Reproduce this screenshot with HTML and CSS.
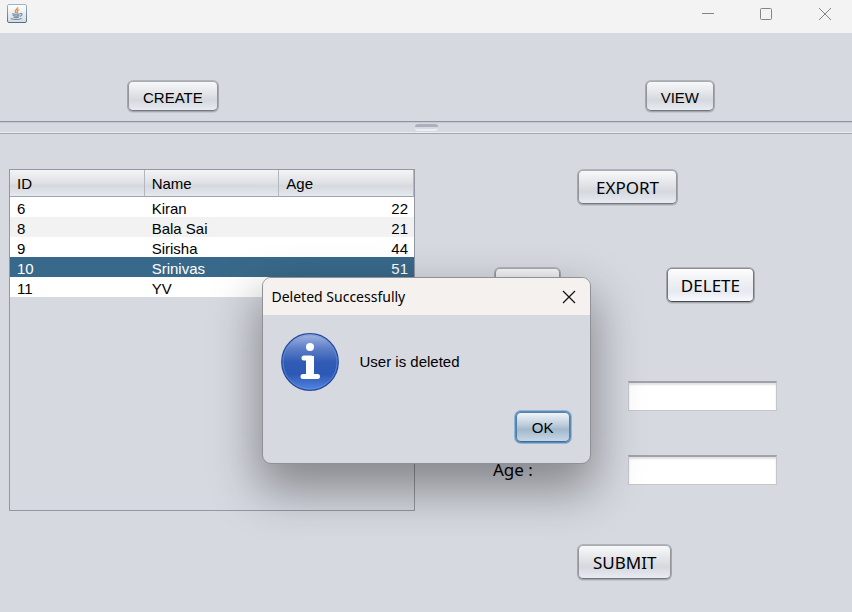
FILE: index.html
```html
<!DOCTYPE html>
<html lang="en">
<head>
<meta charset="utf-8">
<title>Users</title>
<link rel="stylesheet" href="styles.css">
</head>
<body>
<header class="titlebar">
  <svg class="app-icon" viewBox="0 0 20 20" aria-hidden="true">
    <defs>
      <linearGradient id="frame" x1="0" y1="0" x2="0" y2="1"><stop offset="0" stop-color="#9db4c6"/><stop offset="1" stop-color="#4f7187"/></linearGradient>
      <linearGradient id="face" x1="0" y1="0" x2="0" y2="1"><stop offset="0" stop-color="#ffffff"/><stop offset="1" stop-color="#d5dbe2"/></linearGradient>
    </defs>
    <rect x="0.5" y="0.5" width="19" height="18" rx="1.5" fill="url(#face)" stroke="url(#frame)"/>
    <path d="M10.6 3.3C11.5 5 7.4 6 8.2 7.7 8.5 8.4 9.2 8.7 9.1 9.3M11.8 5.6C10.2 6.3 9.8 7 10.4 7.8 10.7 8.4 10.3 8.9 10.1 9.2" fill="none" stroke="#ee8b3a" stroke-width="1.3"/>
    <path d="M5 9.8Q9 10.8 13 9.8M5.8 11.6Q9 12.6 12.3 11.6M6.6 13.2Q9 14 11.6 13.2M3.8 14.6Q9 16.5 14.6 14.5M13 9.7Q15.3 9.1 15 10.6 14.6 11.9 12.8 12.4" fill="none" stroke="#6e8ca5" stroke-width="1.1"/>
  </svg>
  <div class="window-controls">
    <button type="button" class="window-control" aria-label="Minimize"><svg viewBox="0 0 14 14"><path d="M0 7.5H12"/></svg></button>
    <button type="button" class="window-control" aria-label="Maximize"><svg viewBox="0 0 14 14"><rect x="0.5" y="2.5" width="11" height="11" rx="1"/></svg></button>
    <button type="button" class="window-control" aria-label="Close"><svg viewBox="0 0 14 14"><path d="M1 2L13 14M13 2L1 14"/></svg></button>
  </div>
</header>
<nav class="modes">
  <button type="button" class="button">CREATE</button>
  <button type="button" class="button">VIEW</button>
</nav>
<div class="divider"><span class="grip"></span></div>
<main class="content">
  <div class="table-pane">
    <table class="users">
      <thead><tr><th>ID</th><th>Name</th><th>Age</th></tr></thead>
      <tbody>
        <tr><td>6</td><td>Kiran</td><td>22</td></tr>
        <tr><td>8</td><td>Bala Sai</td><td>21</td></tr>
        <tr><td>9</td><td>Sirisha</td><td>44</td></tr>
        <tr class="selected"><td>10</td><td>Srinivas</td><td>51</td></tr>
        <tr><td>11</td><td>YV</td><td></td></tr>
      </tbody>
    </table>
  </div>
  <form class="editor">
    <div class="export-row"><button type="button" class="button large">EXPORT</button></div>
    <div class="action-row">
      <button type="button" class="button large" aria-label="Edit"></button>
      <button type="button" class="button large lit">DELETE</button>
    </div>
    <div class="field-row"><label for="name">Name :</label><input id="name" type="text"></div>
    <div class="field-row"><label for="age">Age :</label><input id="age" type="text"></div>
    <div class="submit-row"><button type="button" class="button large">SUBMIT</button></div>
  </form>
</main>
<dialog open class="message" aria-labelledby="message-title">
  <div class="message-head">
    <h1 id="message-title">Deleted Successfully</h1>
    <button type="button" class="message-close" aria-label="Close"><svg viewBox="0 0 14 14"><path d="M1 1L13 13M13 1L1 13"/></svg></button>
  </div>
  <div class="message-body">
    <svg class="info" viewBox="0 0 58 58" aria-hidden="true">
      <defs><linearGradient id="blue" x1="0" y1="0" x2="0" y2="1"><stop offset="0" stop-color="#a4b8e2"/><stop offset="0.25" stop-color="#6080c8"/><stop offset="0.5" stop-color="#315cb5"/><stop offset="0.72" stop-color="#2c59b5"/><stop offset="1" stop-color="#5485e2"/></linearGradient></defs>
      <circle cx="29" cy="29" r="28.3" fill="url(#blue)" stroke="#27499a" stroke-width="1.2"/>
      <circle cx="29" cy="29" r="27" fill="none" stroke="#6d94df" stroke-opacity="0.6"/>
      <circle cx="29" cy="14" r="4" fill="#fff"/>
      <path d="M23 25H30V43.5M22 43.5H36.5" fill="none" stroke="#fff" stroke-width="5" stroke-linecap="round" stroke-linejoin="round"/>
      <path d="M25 23H33V43H25Z" fill="#fff"/>
    </svg>
    <p>User is deleted</p>
  </div>
  <div class="message-foot"><button type="button" class="button focused">OK</button></div>
</dialog>
</body>
</html>
```
FILE: styles.css
```css
* { box-sizing: border-box; }
body {
  margin: 0;
  min-height: 100vh;
  position: relative;
  display: flex;
  flex-direction: column;
  overflow: hidden;
  background: #d6d9e0;
  color: #000;
  font: 15px/20px "Liberation Sans", Arial, sans-serif;
}
.titlebar {
  height: 33px;
  padding: 4px 20px 0 7px;
  display: flex;
  justify-content: space-between;
  background: #f3f3f3;
}
.app-icon { width: 20px; height: 20px; }
.window-controls { display: flex; gap: 44px; }
.window-control, .message-close {
  width: 14px;
  height: 18px;
  padding: 0;
  border: 0;
  background: none;
}
.window-control svg, .message-close svg {
  display: block;
  width: 14px;
  height: 14px;
  overflow: visible;
  fill: none;
  stroke: #858585;
}
.modes {
  height: 88px;
  padding: 0 138px 10px 128px;
  display: flex;
  justify-content: space-between;
  align-items: flex-end;
}
.button {
  height: 30px;
  padding: 2px 14px 0;
  border: 1px solid;
  border-color: #a9abb1 #94969b #75777d;
  border-radius: 5px;
  background: linear-gradient(#f7f8f9, #e6e7ea 35%, #d5d8dd 65%, #e8ebf3);
  box-shadow: 0 0 0 1px rgba(90, 92, 100, 0.3), 0 1px 0 1px rgba(90, 92, 100, 0.15);
  color: #000;
  font: 15px/19px "Liberation Sans", Arial, sans-serif;
}
.large {
  height: 34px;
  padding: 2px 17px 0;
  font: 17px/20px "Noto Sans", "Open Sans", sans-serif;
}
.lit {
  padding: 2px 13px 0;
  border-color: #8c8e97 #74767d #4a4c55;
  background: linear-gradient(#fdfdfe, #f0f1f4 35%, #e6e9f0 70%, #f9faff);
}
.divider {
  height: 13px;
  padding-top: 2px;
  border-top: 1px solid #90949e;
  border-bottom: 1px solid #a2a6af;
  box-shadow: inset 0 1px #c5c8cf, inset 0 -1px #eceef2;
}
.grip {
  display: block;
  width: 23px;
  height: 7px;
  margin: 0 auto;
  border-top: 3px solid #adb0b9;
  border-bottom: 2px solid #eceef2;
  border-radius: 3px;
}
.content {
  flex: 1;
  padding: 35px 75px 32px 9px;
  display: grid;
  grid-template-columns: 406fr 362fr;
}
.table-pane {
  height: 342px;
  border: 1px solid #9297a1;
}
.users {
  width: 100%;
  table-layout: fixed;
  border-collapse: separate;
  border-spacing: 0;
}
.users th {
  height: 27px;
  padding: 2px 7px 0;
  border-right: 1px solid #b3b6be;
  border-bottom: 1px solid #a0a4ae;
  background: linear-gradient(#f3f4f5, #dfe1e5 50%, #d5d8dd 60%, #e5e9f0);
  font-weight: normal;
  text-align: left;
}
.users td {
  height: 20px;
  padding: 3px 7px 0;
  background: #fff;
  line-height: 17px;
}
.users td:last-child { padding-right: 6px; text-align: right; }
.users tr:nth-child(even) td { background: #f2f2f2; }
.users tr.selected td { background: #39698a; color: #fff; }
.editor {
  padding-left: 78px;
  font: 17px/24px "Noto Sans", "Open Sans", sans-serif;
}
.export-row, .submit-row { display: flex; padding: 1px 0 1px 85px; }
.submit-row .button { padding-left: 14px; padding-right: 14px; }
.action-row {
  margin: 62px 0 78px;
  padding: 1px 23px 1px 2px;
  display: flex;
  justify-content: space-between;
}
.action-row .button:first-child { width: 65px; }
.field-row {
  margin-bottom: 44px;
  display: flex;
  justify-content: space-between;
  align-items: center;
}
.field-row input {
  width: 149px;
  height: 30px;
  padding: 4px 6px;
  border: 1px solid #c4c6ca;
  border-top: 2px solid #a1a3a8;
  background: #fff;
  box-shadow: inset 0 2px 2px #e2e2e4;
  font: inherit;
}
.submit-row { margin-top: 59px; }
.message {
  position: absolute;
  top: 277px;
  left: 0;
  right: 0;
  width: 329px;
  margin: 0 auto;
  padding: 0;
  border: 1px solid #8f9196;
  border-radius: 9px;
  overflow: hidden;
  background: #d6d9e0;
  color: #000;
  box-shadow: 0 22px 48px 4px rgba(0, 0, 0, 0.38);
}
.message-head {
  height: 37px;
  padding: 0 14px 0 9px;
  display: flex;
  justify-content: space-between;
  align-items: center;
  background: #f5f1ef;
}
.message-head h1 {
  margin: 0;
  font: 14px/20px "Noto Sans", "Open Sans", sans-serif;
}
.message-close { height: 16px; }
.message-close svg { stroke: #111; stroke-width: 1.2; }
.message-body {
  padding: 18px 18px 0;
  display: flex;
  align-items: center;
  gap: 21px;
}
.info { width: 58px; height: 58px; }
.message-body p { margin: 0; }
.message-foot {
  padding: 21px 20px;
  display: flex;
  justify-content: flex-end;
}
.focused {
  padding: 1px 15px 0;
  border-color: #5b82a6 #537da2 #456c8e;
  background: linear-gradient(#f0f4f8, #bfcfdd 40%, #a3b8ca 60%, #c4d8e9);
  box-shadow: 0 0 0 1px #5d8ab3, 0 0 0 2px #8fb5d8;
}
```
